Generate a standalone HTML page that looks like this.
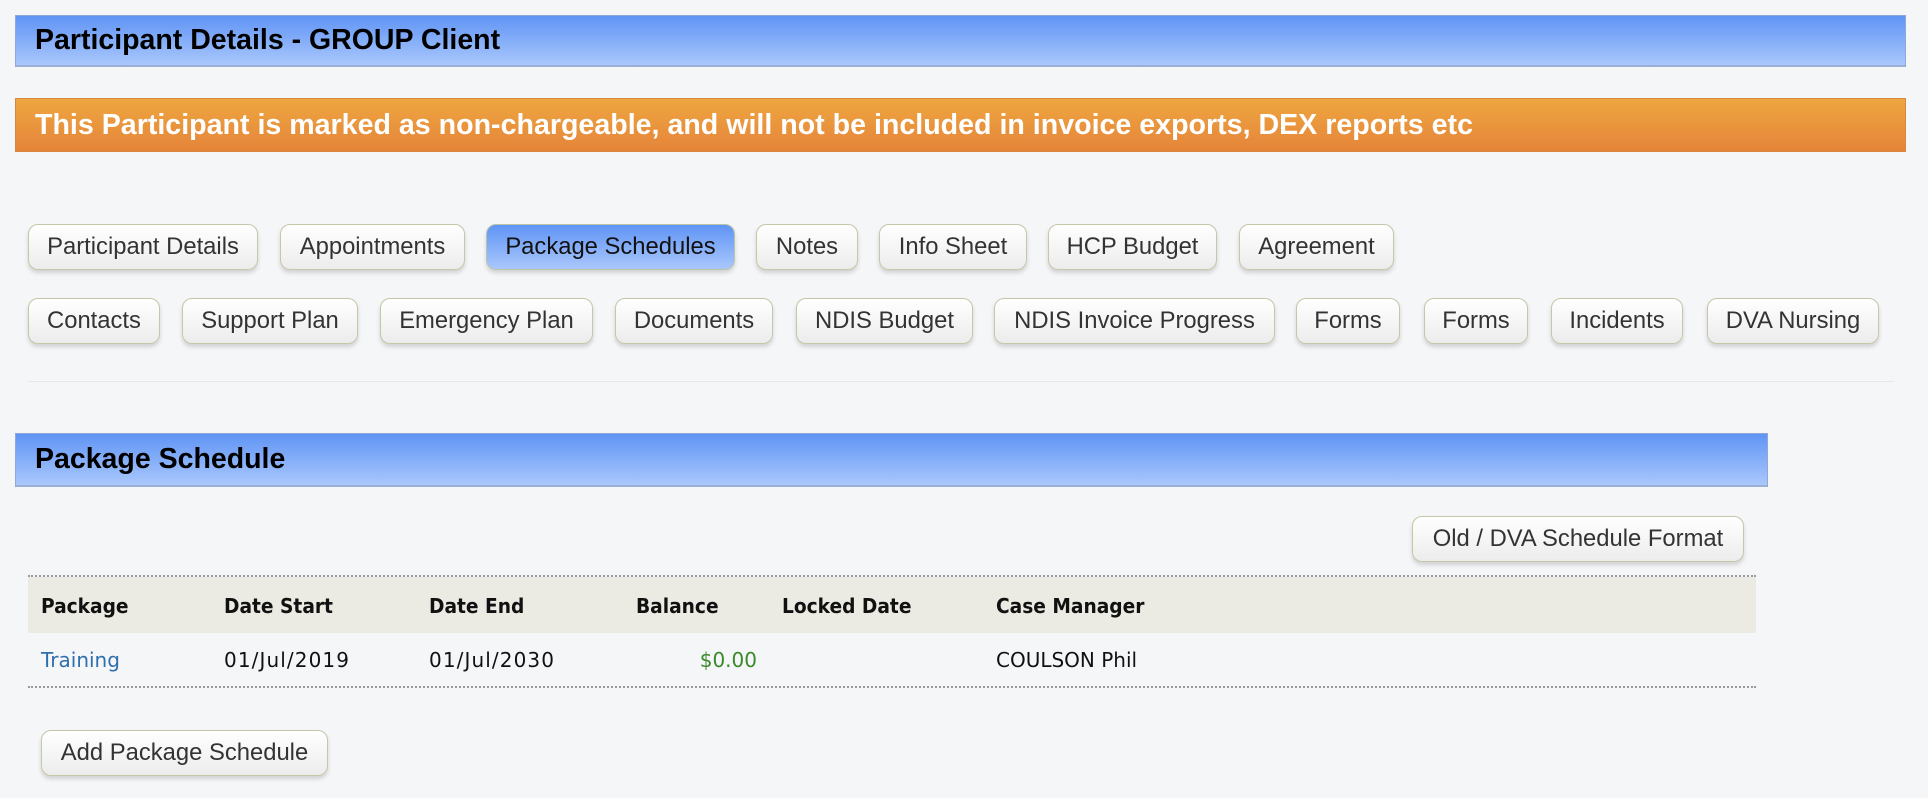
<!DOCTYPE html>
<html><head><meta charset="utf-8"><style>
*{box-sizing:border-box;margin:0;padding:0}
body{width:1928px;height:798px;background:#f5f6f8;position:relative;overflow:hidden;font-family:"Liberation Sans",Arial,sans-serif}
.hdr{position:absolute;left:15px;background:linear-gradient(#6094f5,#a9c7fb);border:1px solid #8fa8d8;border-bottom:2px solid #9aaed6;font-weight:bold;font-size:28.5px;color:#000;padding-left:19px;display:flex;align-items:center}
.warn{position:absolute;left:15px;top:98px;width:1891px;height:54px;background:linear-gradient(#eea740,#e5843a);border:1px solid #d8873e;color:#fff;font-weight:bold;font-size:28.6px;padding-left:19px;display:flex;align-items:center;white-space:nowrap}
.btn{position:absolute;height:46px;border:1px solid #c6c6a8;border-radius:10px;background:linear-gradient(#fff,#ececec);box-shadow:0 3px 4px rgba(0,0,0,.15);color:#333;font-size:23.8px;display:flex;align-items:center;justify-content:center;white-space:nowrap}
.btn.act{background:linear-gradient(#6094f5,#a9c7fb);border-color:#b9c5a8;color:#111}
.sep{position:absolute;left:28px;top:381px;width:1866px;height:1px;background:#e6e7ea}
.tbl{position:absolute;left:28px;top:575px;width:1728px;height:113px;border-top:2px dotted #999;border-bottom:2px dotted #999;font-family:"DejaVu Sans Condensed","DejaVu Sans",sans-serif;font-size:20.7px;color:#111}
.th{position:absolute;top:0;left:0;right:0;height:56px;background:#ebebe3}
.c{position:absolute;white-space:nowrap}
.h{top:17px;font-weight:bold}
.d{top:71px;font-family:"DejaVu Sans",sans-serif;font-size:20px}
.dt{letter-spacing:1.1px}
</style></head><body>
<div class="hdr" style="top:15px;width:1891px;height:52px">Participant Details - GROUP Client</div>
<div class="warn">This Participant is marked as non-chargeable, and will not be included in invoice exports, DEX reports etc</div>

<div class="btn" style="left:28px;top:224px;width:230px">Participant Details</div>
<div class="btn" style="left:280px;top:224px;width:185px">Appointments</div>
<div class="btn act" style="left:486px;top:224px;width:249px">Package Schedules</div>
<div class="btn" style="left:756px;top:224px;width:102px">Notes</div>
<div class="btn" style="left:879px;top:224px;width:148px">Info Sheet</div>
<div class="btn" style="left:1048px;top:224px;width:169px">HCP Budget</div>
<div class="btn" style="left:1239px;top:224px;width:155px">Agreement</div>

<div class="btn" style="left:28px;top:298px;width:132px">Contacts</div>
<div class="btn" style="left:182px;top:298px;width:176px">Support Plan</div>
<div class="btn" style="left:380px;top:298px;width:213px">Emergency Plan</div>
<div class="btn" style="left:615px;top:298px;width:158px">Documents</div>
<div class="btn" style="left:796px;top:298px;width:177px">NDIS Budget</div>
<div class="btn" style="left:994px;top:298px;width:281px">NDIS Invoice Progress</div>
<div class="btn" style="left:1296px;top:298px;width:104px">Forms</div>
<div class="btn" style="left:1424px;top:298px;width:104px">Forms</div>
<div class="btn" style="left:1551px;top:298px;width:132px">Incidents</div>
<div class="btn" style="left:1707px;top:298px;width:172px">DVA Nursing</div>

<div class="sep"></div>
<div class="hdr" style="top:433px;width:1753px;height:54px">Package Schedule</div>
<div class="btn" style="left:1412px;top:516px;width:332px">Old / DVA Schedule Format</div>

<div class="tbl">
<div class="th"></div>
<div class="c h" style="left:13px">Package</div>
<div class="c h" style="left:196px">Date Start</div>
<div class="c h" style="left:401px">Date End</div>
<div class="c h" style="left:608px">Balance</div>
<div class="c h" style="left:754px">Locked Date</div>
<div class="c h" style="left:968px">Case Manager</div>
<div class="c d" style="left:13px;color:#2f6fae">Training</div>
<div class="c d dt" style="left:196px">01/Jul/2019</div>
<div class="c d dt" style="left:401px">01/Jul/2030</div>
<div class="c d" style="left:630px;width:99px;text-align:right;color:#3a8a2a">$0.00</div>
<div class="c d" style="left:968px">COULSON Phil</div>
</div>

<div class="btn" style="left:41px;top:730px;width:287px">Add Package Schedule</div>
</body></html>
